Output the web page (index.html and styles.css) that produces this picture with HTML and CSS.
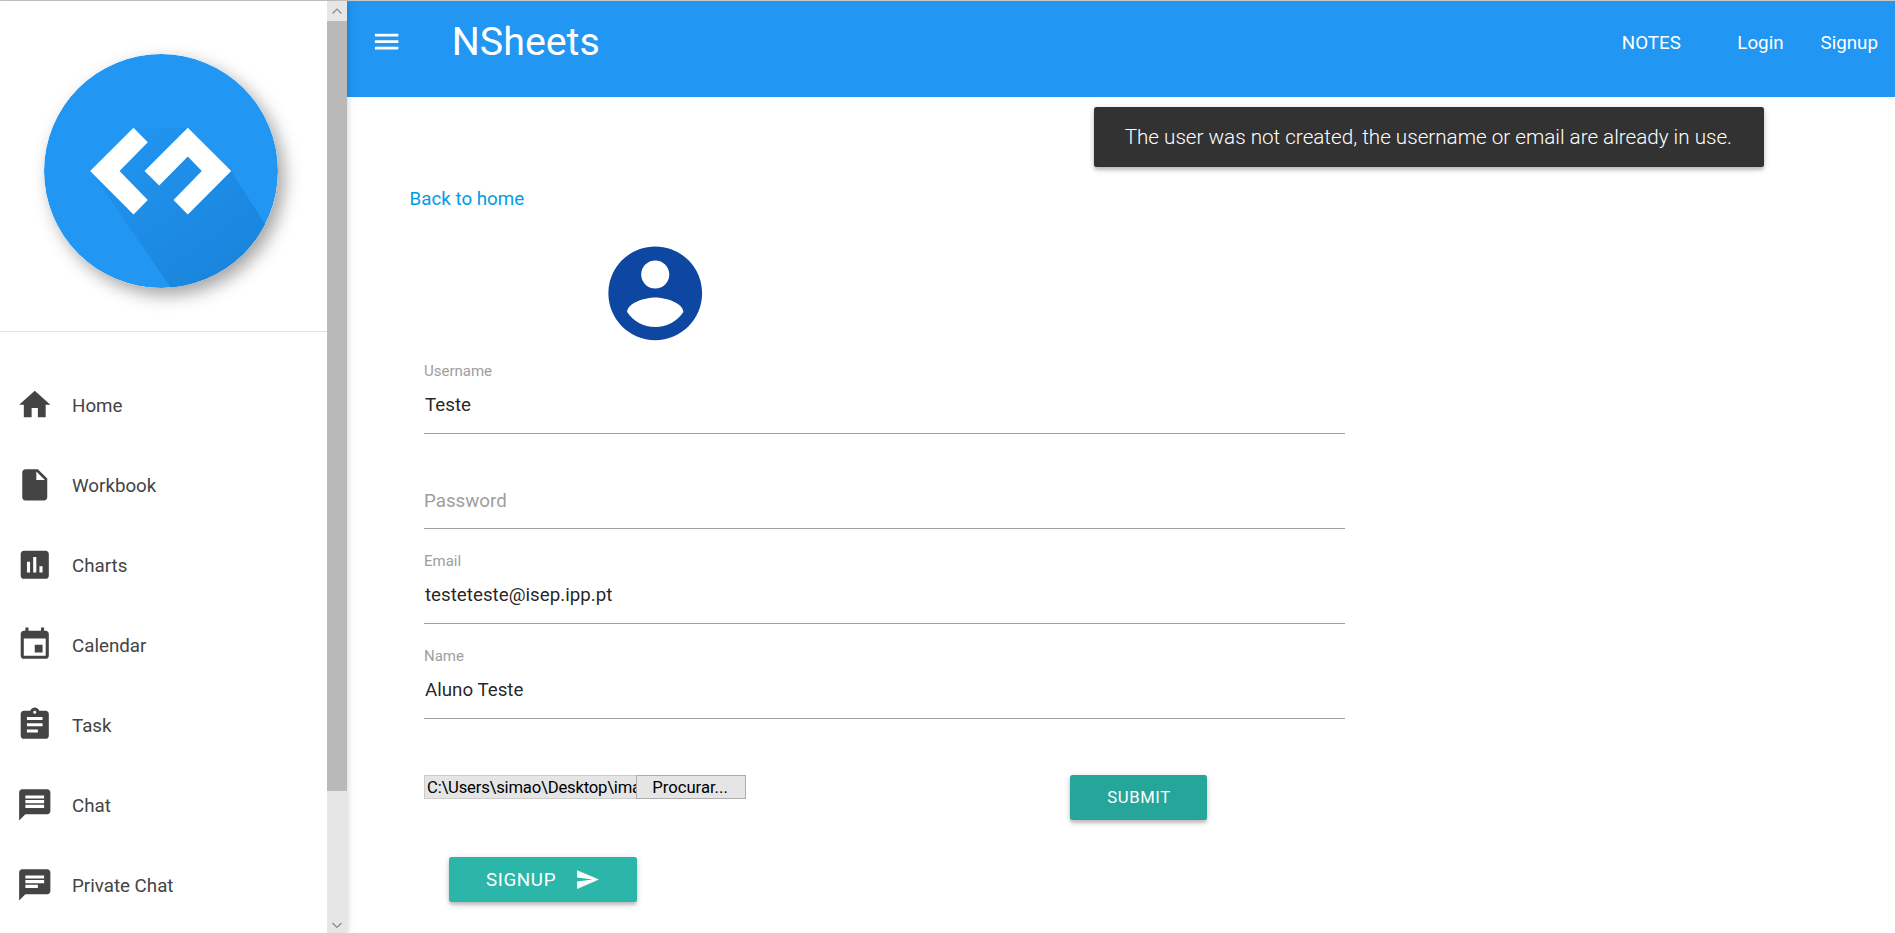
FILE: index.html
```html
<!DOCTYPE html>
<html lang="en">
<head>
<meta charset="utf-8">
<title>NSheets</title>
<link rel="stylesheet" href="styles.css">
</head>
<body>
<div class="app">
  <aside class="sidebar">
    <div class="panel">
      <div class="brand">
        <svg class="logo" viewBox="0 0 234 234">
          <defs>
            <linearGradient id="shade" gradientUnits="userSpaceOnUse" x1="80" y1="70" x2="185" y2="215">
              <stop offset="0" stop-color="#2196f3"/>
              <stop offset=".3" stop-color="#1f90ea"/>
              <stop offset="1" stop-color="#1a85dd"/>
            </linearGradient>
            <clipPath id="disc"><circle cx="117" cy="117" r="117"/></clipPath>
          </defs>
          <circle cx="117" cy="117" r="117" fill="#2196f3"/>
          <path clip-path="url(#disc)" fill="url(#shade)" d="M89.500 73.700H144L187 117L250 215V250H138L46.500 117Z"/>
          <path fill="#fff" d="M89.500 73.700L103.800 88.300L75.500 117L103.800 146L89.500 160.600L46.100 117ZM143.800 73.700L187.200 117L143.800 160.600L129.500 146L157.800 117L143.800 102.600L115.200 131.600L100.500 117Z"/>
        </svg>
      </div>
      <nav class="menu">
        <a class="item"><svg class="icon" viewBox="0 0 24 24"><path d="M10 20v-6h4v6h5v-8h3L12 3 2 12h3v8z"/></svg>Home</a>
        <a class="item"><svg class="icon" viewBox="0 0 24 24"><path fill-rule="evenodd" d="M6 2c-1.100 0-2 .9-2 2v16c0 1.100.9 2 2 2h12c1.100 0 2-.9 2-2V8l-6-6zM13 3.500L18.500 9H13z"/></svg>Workbook</a>
        <a class="item"><svg class="icon" viewBox="0 0 24 24"><path d="M19 3H5c-1.100 0-2 .9-2 2v14c0 1.100.9 2 2 2h14c1.100 0 2-.9 2-2V5c0-1.100-.9-2-2-2zM9 17H7v-7h2v7zm4 0h-2V7h2v10zm4 0h-2v-4h2v4z"/></svg>Charts</a>
        <a class="item"><svg class="icon" viewBox="0 0 24 24"><path d="M17 12h-5v5h5v-5zM16 1v2H8V1H6v2H5c-1.110 0-1.990.9-1.990 2L3 19c0 1.100.89 2 2 2h14c1.100 0 2-.9 2-2V5c0-1.100-.9-2-2-2h-1V1h-2zm3 18H5V8h14v11z"/></svg>Calendar</a>
        <a class="item"><svg class="icon" viewBox="0 0 24 24"><path d="M19 3h-4.180C14.400 1.840 13.300 1 12 1c-1.300 0-2.400.84-2.820 2H5c-1.100 0-2 .9-2 2v14c0 1.100.9 2 2 2h14c1.100 0 2-.9 2-2V5c0-1.100-.9-2-2-2zm-7 0c.55 0 1 .45 1 1s-.45 1-1 1-1-.45-1-1 .45-1 1-1zm2 14H7v-2h7v2zm3-4H7v-2h10v2zm0-4H7V7h10v2z"/></svg>Task</a>
        <a class="item"><svg class="icon" viewBox="0 0 24 24"><path d="M20 2H4c-1.100 0-1.990.9-1.990 2L2 22l4-4h14c1.100 0 2-.9 2-2V4c0-1.100-.9-2-2-2zm-2 12H6v-2h12v2zm0-3H6V9h12v2zm0-3H6V6h12v2z"/></svg>Chat</a>
        <a class="item"><svg class="icon" viewBox="0 0 24 24"><path d="M20 2H4c-1.100 0-1.990.9-1.990 2L2 22l4-4h14c1.100 0 2-.9 2-2V4c0-1.100-.9-2-2-2zM6 9h12v2H6V9zm8 5H6v-2h8v2zm4-6H6V6h12v2z"/></svg>Private Chat</a>
      </nav>
    </div>
    <div class="scrollbar">
      <svg class="arrow" viewBox="0 0 20 20"><path d="M5.500 12.500L10 8L14.500 12.500"/></svg>
      <div class="thumb"></div>
      <svg class="arrow arrow-down" viewBox="0 0 20 20"><path d="M5.500 8L10 12.500L14.500 8"/></svg>
    </div>
  </aside>
  <main class="main">
    <header class="topbar">
      <svg class="burger" viewBox="0 0 24 24"><path d="M3 18h18v-2H3v2zm0-5h18v-2H3v2zm0-7v2h18V6H3z"/></svg>
      <span class="title">NSheets</span>
      <nav class="links"><a class="notes">NOTES</a><a class="login">Login</a><a>Signup</a></nav>
    </header>
    <div class="content">
      <a class="back">Back to home</a>
      <form class="form">
        <svg class="avatar" viewBox="0 0 24 24"><path d="M12 2C6.480 2 2 6.480 2 12s4.480 10 10 10 10-4.480 10-10S17.520 2 12 2zm0 3c1.660 0 3 1.340 3 3s-1.340 3-3 3-3-1.340-3-3 1.340-3 3-3zm0 14.200c-2.500 0-4.710-1.280-6-3.220.03-1.990 4-3.080 6-3.080 1.990 0 5.970 1.090 6 3.080-1.290 1.940-3.500 3.220-6 3.220z"/></svg>
        <div class="field"><span class="label">Username</span><span class="value">Teste</span></div>
        <div class="field"><span class="value placeholder">Password</span></div>
        <div class="field"><span class="label">Email</span><span class="value">testeteste@isep.ipp.pt</span></div>
        <div class="field"><span class="label">Name</span><span class="value">Aluno Teste</span></div>
        <div class="upload">
          <div class="path">C:\Users\simao\Desktop\ima</div>
          <div class="browse">Procurar...</div>
          <div class="btn submit">SUBMIT</div>
        </div>
        <div class="btn signup">SIGNUP<svg class="send" viewBox="0 0 24 24"><path d="M2.010 21L23 12 2.010 3 2 10l15 2-15 2z"/></svg></div>
      </form>
    </div>
  </main>
</div>
<div class="toast">The user was not created, the username or email are already in use.</div>
</body>
</html>
```
FILE: styles.css
```css
* { box-sizing: border-box; }
body {
  margin: 0;
  height: 933px;
  overflow: hidden;
  background: #fff;
  color: rgba(0, 0, 0, .87);
  font: 18.75px/28px Roboto, sans-serif;
}
svg { display: block; flex: none; }
.app {
  display: flex;
  height: 933px;
  border-top: 1px solid #c8c8c8;
}
.sidebar {
  display: flex;
  flex: none;
  width: 347px;
  position: relative;
  box-shadow: 0 2px 6px rgba(0, 0, 0, .14), 0 1px 12px rgba(0, 0, 0, .08);
  background: #fff;
}
.panel { width: 327px; overflow: hidden; }
.brand {
  height: 331px;
  padding: 53px 0 0 44.400px;
  border-bottom: 1px solid #e0e0e0;
}
.logo {
  width: 234px;
  height: 234px;
  border-radius: 50%;
  box-shadow: 6px 7px 17px rgba(0, 0, 0, .36);
}
.menu { padding-top: 33.500px; }
.item {
  display: flex;
  align-items: center;
  gap: 18.500px;
  height: 80px;
  padding-left: 16px;
  color: #444;
}
.icon { width: 37.500px; height: 37.500px; margin-top: -1px; fill: #444; }
.scrollbar {
  display: flex;
  flex-direction: column;
  width: 20px;
  background: #e6e6e6;
}
.thumb { height: 770px; background: #b9b9b9; }
.arrow { width: 20px; height: 20px; fill: none; stroke: #8a8a8a; stroke-width: 1.2; }
.arrow-down { margin-top: auto; margin-bottom: -2px; }
.main { flex: 1; }
.topbar {
  display: flex;
  align-items: flex-start;
  height: 96px;
  padding: 0 17px 0 24px;
  background: #2196f3;
  color: #fff;
}
.burger { width: 31.250px; height: 31.250px; margin-top: 24.500px; fill: #fff; }
.title { margin: 17px 0 0 49.500px; font-size: 39.375px; line-height: 48px; }
.links { display: flex; margin: 28px 0 0 auto; }
.notes { margin-right: 56.500px; }
.login { margin-right: 37px; }
.content { padding: 88px 0 0 62.600px; }
.back { display: block; color: #039be5; }
.form { width: 921px; margin-left: 14.400px; }
.avatar { width: 112.500px; height: 112.500px; margin: 24px 0 0 175px; fill: #0d47a1; }
.field {
  display: flex;
  flex-direction: column;
  justify-content: flex-end;
  height: 95px;
  padding-bottom: 14px;
  border-bottom: 1px solid #9e9e9e;
}
.avatar + .field { height: 84px; }
.label { font-size: 15px; line-height: 20px; margin-bottom: 10px; color: #9e9e9e; }
.value { padding-left: 1px; }
.placeholder { padding-left: 0; color: #9e9e9e; margin-bottom: -1px; }
.upload { display: flex; align-items: flex-start; margin-top: 56px; font-size: 16.670px; line-height: 24px; }
.path {
  width: 212px;
  height: 24px;
  padding-left: 2px;
  border: 1px solid #ccc;
  border-right: 0;
  background: #e5e5e5;
  color: #000;
  overflow: hidden;
  white-space: nowrap;
  letter-spacing: -.2px;
}
.browse {
  width: 110px;
  height: 24px;
  padding-right: 2px;
  border: 1px solid #adadad;
  background: #e5e5e5;
  color: #000;
  text-align: center;
}
.btn {
  display: flex;
  align-items: center;
  height: 45px;
  border-radius: 2.500px;
  color: #fff;
  letter-spacing: .625px;
  box-shadow: 0 2.500px 2.500px rgba(0, 0, 0, .1), 0 4px 6px -1px rgba(0, 0, 0, .12), 0 1px 6px rgba(0, 0, 0, .13);
}
.submit { justify-content: center; width: 137px; margin-left: 324px; padding: 1px 0 0 1px; background: #26a69a; }
.signup { width: 188px; margin: 37px 0 0 25px; padding: 1px 0 0 37px; background: #2bb6a9; }
.send { width: 25px; height: 25px; margin-left: 18.500px; fill: #fff; }
.toast {
  position: absolute;
  left: 1094px;
  top: 107px;
  width: 670px;
  height: 60px;
  padding: 0 30.700px;
  border-radius: 2.500px;
  background: #323232;
  color: #fff;
  font-size: 20.650px;
  font-weight: 300;
  line-height: 60px;
  white-space: nowrap;
  box-shadow: 0 2.500px 2.500px rgba(0, 0, 0, .1), 0 4px 6px -1px rgba(0, 0, 0, .12), 0 1px 6px rgba(0, 0, 0, .14);
}
```
